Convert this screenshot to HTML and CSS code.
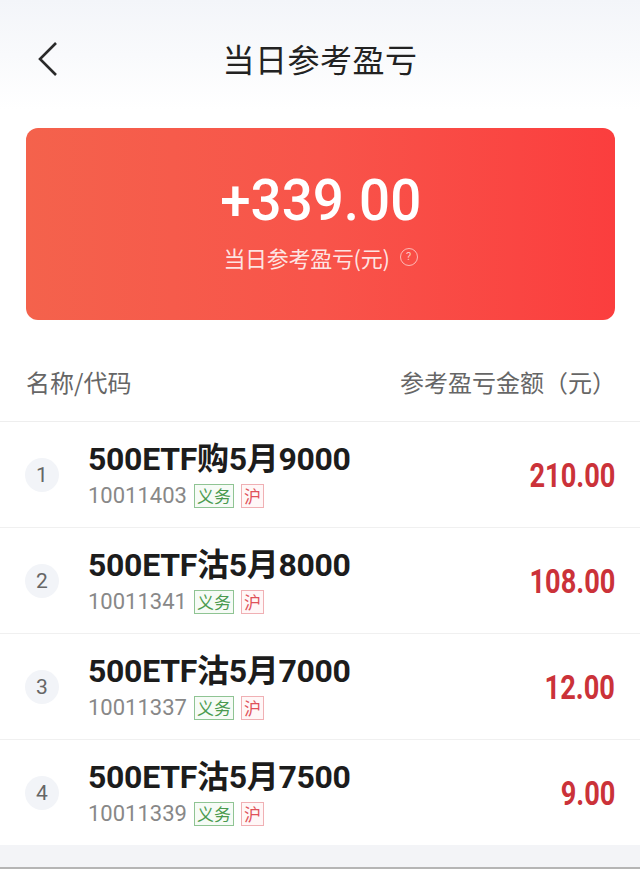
FILE: index.html
```html
<!DOCTYPE html>
<html lang="zh-CN">
<head>
    <meta charset="UTF-8">
    <meta name="viewport" content="width=device-width, initial-scale=1.0">
    <title>当日参考盈亏</title>
    <link rel="stylesheet" href="styles.css">
</head>
<body>

    <header class="topbar">
        <span class="back">
            <svg width="24" height="36" viewBox="0 0 24 36"><path d="M20 2 L4 18 L20 34" fill="none" stroke="#2a2a2a" stroke-width="2.6"/></svg>
        </span>
        <h1 class="title">当日参考盈亏</h1>
    </header>

    <section class="summary">
        <div class="total">+339.00</div>
        <div class="caption">
            当日参考盈亏(元)
            <span class="help">?</span>
        </div>
    </section>

    <div class="thead">
        <span>名称/代码</span>
        <span>参考盈亏金额（元）</span>
    </div>

    <ul class="list">
        <li class="row">
            <span class="rank">1</span>
            <div class="info">
                <div class="name">500ETF购5月9000</div>
                <div class="meta">10011403 <span class="tag duty">义务</span><span class="tag sh">沪</span></div>
            </div>
            <span class="amount">210.00</span>
        </li>
        <li class="row">
            <span class="rank">2</span>
            <div class="info">
                <div class="name">500ETF沽5月8000</div>
                <div class="meta">10011341 <span class="tag duty">义务</span><span class="tag sh">沪</span></div>
            </div>
            <span class="amount">108.00</span>
        </li>
        <li class="row">
            <span class="rank">3</span>
            <div class="info">
                <div class="name">500ETF沽5月7000</div>
                <div class="meta">10011337 <span class="tag duty">义务</span><span class="tag sh">沪</span></div>
            </div>
            <span class="amount">12.00</span>
        </li>
        <li class="row">
            <span class="rank">4</span>
            <div class="info">
                <div class="name">500ETF沽5月7500</div>
                <div class="meta">10011339 <span class="tag duty">义务</span><span class="tag sh">沪</span></div>
            </div>
            <span class="amount">9.00</span>
        </li>
    </ul>

    <div class="footer"></div>

</body>
</html>
```

FILE: styles.css
```css
body {
    font-family: Roboto, "Noto Sans CJK SC", sans-serif;
    margin: 0;
    width: 640px;
    height: 869px;
    overflow: hidden;
    background: linear-gradient(#f3f5f9 0, #ffffff 110px);
    color: #222;
}
.topbar {
    height: 122px;
    display: flex;
    align-items: center;
    justify-content: center;
    position: relative;
    padding-bottom: 6px;
    box-sizing: border-box;
}
.back {
    position: absolute;
    left: 36px;
    top: 41px;
}
.title {
    margin: 0;
    font-size: 32px;
    font-weight: 400;
    color: #222;
    font-family: "Noto Sans CJK SC", sans-serif;
    letter-spacing: 0.5px;
}
.summary {
    margin: 6px 25px 0 26px;
    height: 192px;
    border-radius: 12px;
    background: linear-gradient(90deg, #f4624c 0%, #f8544a 50%, #fb3e3e 100%);
    display: flex;
    flex-direction: column;
    align-items: center;
    justify-content: center;
    color: #fff;
}
.total {
    font-size: 57px;
    font-weight: 500;
    line-height: 60px;
    margin-top: -4px;
    transform: scaleX(0.96);
}
.caption {
    margin-top: 10px;
    font-size: 22px;
    font-family: "Noto Sans CJK SC", sans-serif;
    color: rgba(255, 255, 255, 0.85);
    display: flex;
    align-items: center;
    letter-spacing: -0.3px;
}
.help {
    width: 16px;
    height: 16px;
    border: 1.5px solid rgba(255, 255, 255, 0.6);
    border-radius: 50%;
    font-size: 11px;
    line-height: 16px;
    text-align: center;
    color: rgba(255, 255, 255, 0.7);
    margin-left: 10px;
    letter-spacing: 0;
    font-family: Roboto, sans-serif;
}
.thead {
    display: flex;
    justify-content: space-between;
    align-items: center;
    height: 102px;
    padding: 22px 24px 0 26px;
    box-sizing: border-box;
    font-family: "Noto Sans CJK SC", sans-serif;
    font-size: 24px;
    color: #666;
    border-bottom: 1px solid #eeeeee;
}
.list {
    list-style: none;
    margin: 0;
    padding: 0;
    background: #fff;
}
.row {
    height: 105px;
    display: flex;
    align-items: center;
    padding: 0 25px 0 25px;
    border-bottom: 1px solid #f0f0f0;
}
.row:last-child {
    border-bottom: none;
}
.rank {
    width: 34px;
    height: 34px;
    border-radius: 50%;
    background: #f2f4f8;
    color: #666;
    font-size: 21px;
    line-height: 34px;
    text-align: center;
    flex-shrink: 0;
}
.info {
    margin-left: 29px;
    flex: 1;
}
.name {
    font-size: 32px;
    font-weight: 700;
    color: #1c1c1c;
    line-height: 36px;
    letter-spacing: -0.3px;
    font-family: Roboto, "Noto Sans CJK SC", sans-serif;
}
.meta {
    margin-top: 6px;
    font-size: 22px;
    color: #888;
    display: flex;
    align-items: center;
    line-height: 26px;
}
.tag {
    font-family: "Noto Sans CJK SC", sans-serif;
    font-size: 17px;
    line-height: 22px;
    padding: 0 2px;
    border: 1px solid;
    margin-left: 7px;
}
.duty {
    color: #4a9a4f;
    border-color: #8fc493;
    background: #f6fbf6;
}
.sh {
    color: #e0515a;
    border-color: #f0b0b4;
    background: #fff7f7;
}
.amount {
    font-size: 34px;
    font-weight: 700;
    color: #cb3239;
    transform: scaleX(0.8);
    transform-origin: right center;
}
.footer {
    height: 22px;
    background: #f3f4f7;
    border-bottom: 3px solid #b5b5b5;
}
```
